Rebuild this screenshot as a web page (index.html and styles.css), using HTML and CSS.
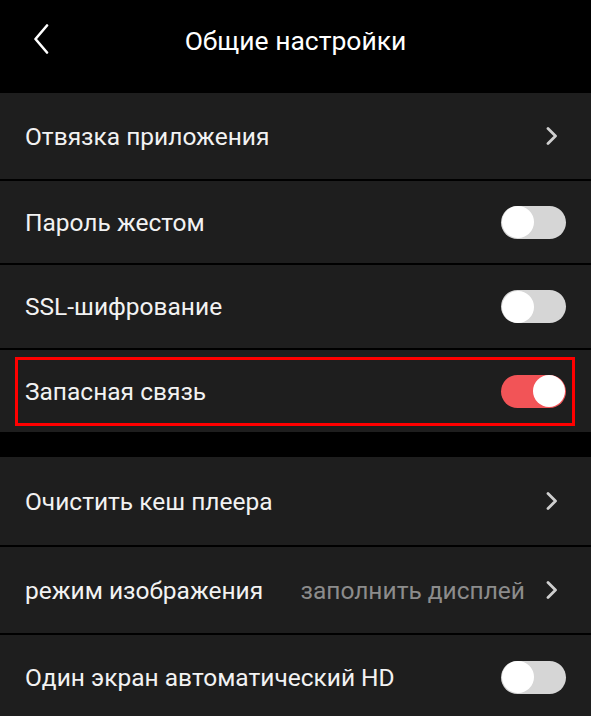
FILE: index.html
```html
<!DOCTYPE html>
<html lang="ru">
<head>
<meta charset="utf-8">
<title>Общие настройки</title>
<link rel="stylesheet" href="styles.css">
</head>
<body>
<div class="screen">
  <header class="topbar">
    <span class="back">
      <svg width="16" height="30" viewBox="0 0 16 30"><path d="M14 1.5 L2.5 15 L14 28.5" fill="none" stroke="#ffffff" stroke-width="2.6" stroke-linecap="round" stroke-linejoin="round"/></svg>
    </span>
    <h1 class="title">Общие настройки</h1>
  </header>

  <section class="group">
    <div class="row r1">
      <span class="label">Отвязка приложения</span>
      <span class="chev"><svg width="12" height="18" viewBox="0 0 12 18"><path d="M2 1.5 L9.5 9 L2 16.5" fill="none" stroke="#cfcfcf" stroke-width="2.8" stroke-linecap="round" stroke-linejoin="round"/></svg></span>
    </div>
    <div class="row r2">
      <span class="label">Пароль жестом</span>
      <span class="toggle"><span class="knob"></span></span>
    </div>
    <div class="row r3">
      <span class="label">SSL-шифрование</span>
      <span class="toggle"><span class="knob"></span></span>
    </div>
    <div class="row r4 highlighted">
      <span class="label">Запасная связь</span>
      <span class="toggle on"><span class="knob"></span></span>
    </div>
  </section>

  <section class="group second">
    <div class="row r5">
      <span class="label">Очистить кеш плеера</span>
      <span class="chev"><svg width="12" height="18" viewBox="0 0 12 18"><path d="M2 1.5 L9.5 9 L2 16.5" fill="none" stroke="#cfcfcf" stroke-width="2.8" stroke-linecap="round" stroke-linejoin="round"/></svg></span>
    </div>
    <div class="row r6">
      <span class="label">режим изображения</span>
      <span class="value">заполнить дисплей</span>
      <span class="chev"><svg width="12" height="18" viewBox="0 0 12 18"><path d="M2 1.5 L9.5 9 L2 16.5" fill="none" stroke="#cfcfcf" stroke-width="2.8" stroke-linecap="round" stroke-linejoin="round"/></svg></span>
    </div>
    <div class="row r7">
      <span class="label">Один экран автоматический HD</span>
      <span class="toggle"><span class="knob"></span></span>
    </div>
  </section>
</div>
</body>
</html>
```

FILE: styles.css
```css
html, body {
  margin: 0;
  padding: 0;
  background: #000000;
}

.screen {
  width: 591px;
  height: 716px;
  overflow: hidden;
  background: #000000;
  font-family: Roboto, "Noto Sans", "Liberation Sans", sans-serif;
  color: #f2f2f2;
  display: flex;
  flex-direction: column;
}

.topbar {
  height: 93px;
  flex: none;
  position: relative;
  display: flex;
  align-items: center;
  justify-content: center;
}

.back {
  position: absolute;
  left: 33px;
  top: 24px;
  width: 16px;
  height: 30px;
  display: block;
}

.back svg {
  display: block;
}

.title {
  margin: 0 0 12px 0;
  font-size: 26.5px;
  font-weight: 400;
  color: #ffffff;
  letter-spacing: 0;
}

.group {
  display: flex;
  flex-direction: column;
  gap: 2px;
  background: #000000;
  flex: none;
}

.group.second {
  margin-top: 25px;
}

.row {
  background: #1e1e1e;
  display: flex;
  align-items: center;
  padding: 0 25px 0 25px;
  position: relative;
}

.r1 { height: 86px; }
.r2 { height: 82px; }
.r3 { height: 83px; }
.r4 { height: 82px; }
.r5 { height: 88px; }
.r6 { height: 86px; }
.r7 { height: 84px; }

.label {
  font-size: 24.5px;
  flex: 1;
  white-space: nowrap;
  color: #f2f2f2;
}

.value {
  font-size: 24.5px;
  color: #8c8c8c;
  margin-right: 21px;
  white-space: nowrap;
}

.chev {
  width: 12px;
  height: 18px;
  margin-right: 8px;
  display: block;
}

.chev svg {
  display: block;
}

.toggle {
  width: 65px;
  height: 33px;
  border-radius: 17px;
  background: #d6d6d6;
  display: flex;
  align-items: center;
  padding: 0 1px;
  box-sizing: border-box;
  margin-right: 0;
}

.toggle .knob {
  width: 32px;
  height: 32px;
  border-radius: 50%;
  background: #ffffff;
  display: block;
}

.toggle.on {
  background: #f25457;
  justify-content: flex-end;
}

.highlighted::after {
  content: "";
  position: absolute;
  left: 15px;
  right: 16px;
  top: 7px;
  bottom: 6px;
  border: 3px solid #ff0000;
  pointer-events: none;
}
```
